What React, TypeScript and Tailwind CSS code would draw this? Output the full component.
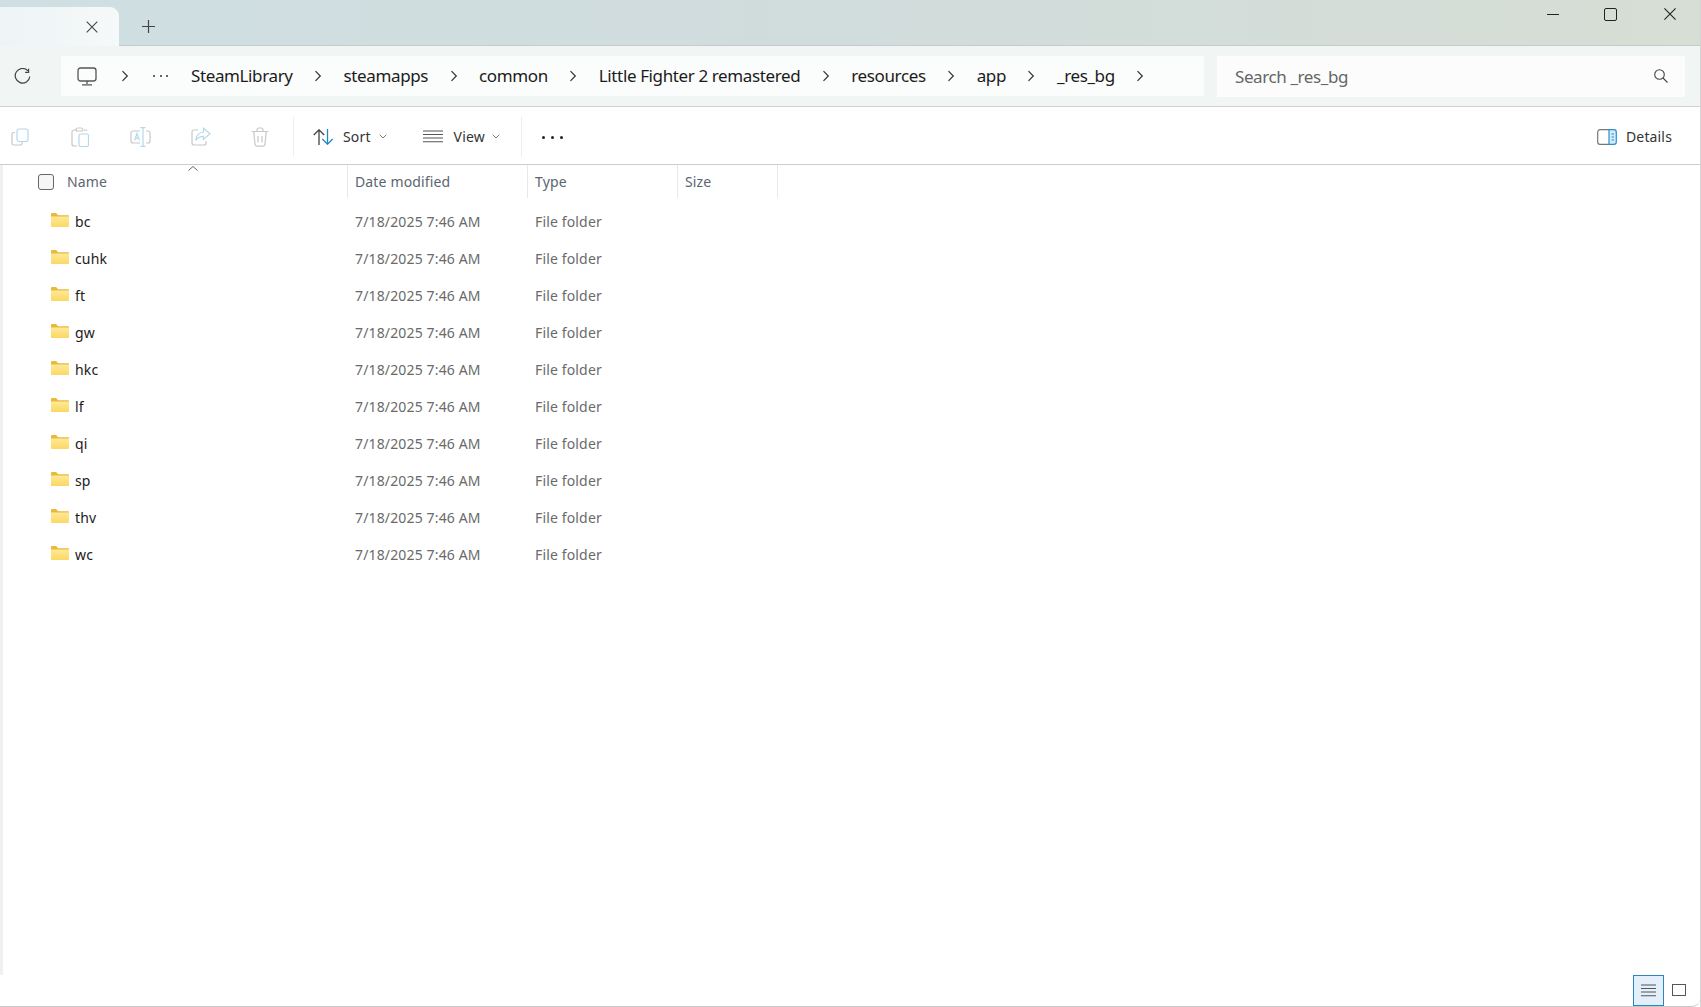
import React from "react";

const crumbs = ["SteamLibrary", "steamapps", "common", "Little Fighter 2 remastered", "resources", "app", "_res_bg"];
const folders = ["bc", "cuhk", "ft", "gw", "hkc", "lf", "qi", "sp", "thv", "wc"];

function Chevron() {
  return (
    <svg width="8" height="12" viewBox="0 0 8 12" fill="none" stroke="#333" strokeWidth="1.2">
      <path d="M1.5 1.2 6.3 6l-4.8 4.8" />
    </svg>
  );
}

function SmallCaret() {
  return (
    <svg width="8" height="5" viewBox="0 0 8 5" fill="none" stroke="#777" strokeWidth="1">
      <path d="M.7.8 4 4l3.3-3.2" />
    </svg>
  );
}

function Folder() {
  return (
    <svg width="18" height="14" viewBox="0 0 18 14" className="shrink-0 -mt-[3px]">
      <defs>
        <linearGradient id="fold" x1="0" y1="0" x2="0" y2="1">
          <stop offset="0" stopColor="#fde997" />
          <stop offset="1" stopColor="#fcd862" />
        </linearGradient>
      </defs>
      <path d="M0 1.2C0 .5.5 0 1.2 0h3.900l2 2.200H17c.6 0 1 .4 1 1V5H0z" fill="#e9b93a" />
      <path d="M0 3.500h18V13c0 .6-.4 1-1 1H1c-.6 0-1-.4-1-1z" fill="url(#fold)" />
    </svg>
  );
}

function ToolIcons() {
  const gray = "#c8c8c8";
  const blue = "#b5d8ee";
  return (
    <div className="flex items-center pl-[11px]">
      <svg width="18" height="18" viewBox="0 0 18 18" fill="none" strokeWidth="1.2" className="mr-[42px]">
        <path d="M4 4.500H2.600C1.700 4.500 1 5.200 1 6.100v9.300c0 .9.7 1.600 1.600 1.600h6.800c.9 0 1.600-.7 1.600-1.600V14" stroke={gray} />
        <rect x="6" y="1" width="11" height="12.500" rx="2.200" stroke={blue} />
      </svg>
      <svg width="18" height="20" viewBox="0 0 18 20" fill="none" strokeWidth="1.2" className="mr-[41px]">
        <path d="M6 3H3C1.900 3 1 3.900 1 5v12c0 1.100.9 2 2 2h3M13 3h1.500C15 3 15.500 3.300 15.800 4M5 3c0-1 .7-2 1.600-2h3.800C11.300 1 12 2 12 3c0 .6-.4 1-1 1H6c-.6 0-1-.4-1-1z" stroke={gray} />
        <rect x="8" y="7" width="9.500" height="12.500" rx="1.800" stroke={blue} />
      </svg>
      <svg width="21" height="20" viewBox="0 0 21 20" fill="none" strokeWidth="1.2" className="mr-[40px]">
        <path d="M10 4H3C1.900 4 1 4.900 1 6v8c0 1.100.9 2 2 2h7M16 4h2c1.100 0 2 .9 2 2v8c0 1.100-.9 2-2 2h-2" stroke={gray} />
        <path d="M10.500.7h5M13 .7v18.600M10.500 19.300h5M4.500 13.500 7 6.500l2.500 7M5.400 11.200h3.200" stroke={blue} />
      </svg>
      <svg width="20" height="19" viewBox="0 0 20 19" fill="none" strokeWidth="1.2" className="mr-[40px]">
        <path d="M7 3H3C1.900 3 1 3.900 1 5v11c0 1.100.9 2 2 2h10c1.100 0 2-.9 2-2v-2" stroke={gray} />
        <path d="M12.500 1.200 19 6.800l-6.500 5.600V9.300C9 9.300 6.300 10.500 4.800 13.500c.3-5 3-8 7.700-8.500z" stroke={blue} />
      </svg>
      <svg width="18" height="20" viewBox="0 0 18 20" fill="none" stroke={gray} strokeWidth="1.200">
        <path d="M.7 4.500h16.600M6 4.500V3c0-1 .8-2 2-2h2c1.200 0 2 1 2 2v1.500M2.700 4.500 4 17c.1 1.200 1 2.200 2.300 2.200h5.400c1.300 0 2.200-1 2.300-2.200l1.300-12.500M7 9v6.500M11 9v6.500" />
      </svg>
    </div>
  );
}

export default function App() {
  return (
    <div className="w-[1701px] h-[1007px] flex flex-col overflow-hidden bg-white border-r border-[#d4d4d4] text-[#1b1b1b] font-['Noto_Sans','Open_Sans',sans-serif]">
      {/* title bar */}
      <div className="h-[46px] shrink-0 flex bg-gradient-to-r from-[#cfdfe3] via-[#d1dcdc] to-[#d6ded5] border-b border-[#c4cdcb]">
        <div className="w-[119px] mt-[7px] h-[39px] rounded-tr-[9px] bg-gradient-to-r from-[#eef3f5] to-[#f5f9fa] flex items-center justify-end pr-[21px]">
          <svg width="12" height="12" viewBox="0 0 12 12" stroke="#444" strokeWidth="1.100" fill="none">
            <path d="M.7.700l10.600 10.600M11.300.700.7 11.300" />
          </svg>
        </div>
        <div className="ml-[23px] mt-[20px] h-[13px]">
          <svg width="13" height="13" viewBox="0 0 13 13" stroke="#444" strokeWidth="1.200" fill="none">
            <path d="M6.500 0v13M0 6.500h13" />
          </svg>
        </div>
        <div className="ml-auto flex items-start pt-[8px] pr-[24px]">
          <div className="w-[12px] h-[12px] flex items-center">
            <div className="w-[12px] h-px bg-[#222]" />
          </div>
          <div className="ml-[45px] w-[13px] h-[13px] border-[1.5px] border-[#222] rounded-[2px]" />
          <svg width="12" height="12" viewBox="0 0 12 12" stroke="#222" strokeWidth="1.100" fill="none" className="ml-[47px]">
            <path d="M.4.400l11.200 11.200M11.600.400.4 11.600" />
          </svg>
        </div>
      </div>

      {/* address row */}
      <div className="h-[61px] shrink-0 flex items-center bg-[#f1f6f5] border-b border-[#cfd2d2] pr-[15px]">
        <div className="w-[61px] shrink-0 flex justify-center pr-[16px]">
          <svg width="17" height="17" viewBox="0 0 17 17" fill="none" stroke="#444" strokeWidth="1.200">
            <path d="M13.900 2.800A7.300 7.300 0 1 0 15.800 8.500" />
            <path d="M14.600.8v3.500h-3.500" />
          </svg>
        </div>
        <div className="w-[1143px] h-[40px] shrink-0 flex items-center bg-[#fbfcfc] pl-[16px] text-[17px] tracking-[-0.38px]">
          <svg width="20" height="19" viewBox="0 0 20 19" fill="none" stroke="#555" strokeWidth="1.300" className="shrink-0">
            <rect x="1" y="1" width="18" height="13" rx="2.500" />
            <path d="M10 14v3M5 17.800h10" />
          </svg>
          <div className="w-[56px] shrink-0 flex justify-center">
            <Chevron />
          </div>
          <div className="w-[15px] shrink-0 flex justify-between">
            <i className="w-[2px] h-[2px] rounded-full bg-[#333]" />
            <i className="w-[2px] h-[2px] rounded-full bg-[#333]" />
            <i className="w-[2px] h-[2px] rounded-full bg-[#333]" />
          </div>
          <div className="w-[23px] shrink-0" />
          {crumbs.map((c) => (
            <React.Fragment key={c}>
              <span className="whitespace-nowrap">{c}</span>
              <div className="w-[51px] shrink-0 flex justify-center">
                <Chevron />
              </div>
            </React.Fragment>
          ))}
        </div>
        <div className="ml-[13px] flex-1 h-[41px] flex items-center bg-[#fbfcfb] pl-[18px] pr-[17px] text-[17px] tracking-[-0.4px] text-[#666]">
          <span className="pt-px">Search _res_bg</span>
          <svg width="14" height="14" viewBox="0 0 14 14" fill="none" stroke="#444" strokeWidth="1.100" className="ml-auto">
            <circle cx="5.500" cy="5.500" r="4.800" />
            <path d="M9 9l4.500 4.500" />
          </svg>
        </div>
      </div>

      {/* command bar */}
      <div className="h-[58px] shrink-0 flex items-center pt-[2px] border-b border-[#cdcdcd] text-[14px] tracking-[0.15px] text-[#333]">
        <ToolIcons />
        <div className="ml-[24px] w-px h-[40px] bg-[#eeeeee]" />
        <svg width="21" height="16" viewBox="0 0 21 16" fill="none" strokeWidth="1.300" className="ml-[19px]">
          <path d="M6 16V1M.8 6 6 .8 11.200 6" stroke="#444" />
          <path d="M14.500 0v15M9.300 10l5.200 5.200L19.700 10" stroke="#1f86c8" />
        </svg>
        <span className="ml-[9px]">Sort</span>
        <div className="ml-[8px]"><SmallCaret /></div>
        <svg width="20" height="13" viewBox="0 0 20 13" stroke="#555" strokeWidth="1.100" className="ml-[36px]">
          <path d="M0 1h20M0 4.500h20M0 8h20M0 11.700h20" />
        </svg>
        <span className="ml-[11px]">View</span>
        <div className="ml-[7px]"><SmallCaret /></div>
        <div className="ml-[21px] w-px h-[40px] bg-[#eeeeee]" />
        <div className="ml-[20px] mt-px w-[21px] flex justify-between">
          <i className="w-[3px] h-[3px] rounded-full bg-[#222]" />
          <i className="w-[3px] h-[3px] rounded-full bg-[#222]" />
          <i className="w-[3px] h-[3px] rounded-full bg-[#222]" />
        </div>
        <svg width="20" height="16" viewBox="0 0 20 16" fill="none" strokeWidth="1.200" className="ml-auto">
          <path d="M12 .7H3C1.700.7.700 1.700.700 3v10c0 1.300 1 2.300 2.300 2.300h9" stroke="#777" />
          <path d="M12 .7h5c1.300 0 2.300 1 2.300 2.300v10c0 1.300-1 2.300-2.300 2.300h-5z" fill="#d5ebf8" stroke="#2b8fd0" />
          <path d="M14.500 5h2.500M14.500 8h2.500M14.500 11h2.500" stroke="#2b8fd0" />
        </svg>
        <span className="ml-[9px] mr-[28px]">Details</span>
      </div>

      {/* file list */}
      <div className="flex-1 flex min-h-0">
        <div className="w-[3px] shrink-0 bg-[#f0f0f0]" />
        <div className="flex-1 flex flex-col text-[14px] tracking-[0.15px]">
          <div className="h-[33px] shrink-0 flex text-[#5b6570]">
            <div className="relative w-[344px] flex items-center pl-[35px]">
              <div className="w-[16px] h-[16px] rounded-[3px] border border-[#666] bg-[#f6f6f6]" />
              <span className="ml-[13px]">Name</span>
              <svg width="10" height="5" viewBox="0 0 10 5" fill="none" stroke="#666" className="absolute left-[185px] top-[1px]">
                <path d="M.5 4.500 5 .5l4.500 4" />
              </svg>
            </div>
            <div className="w-[180px] flex items-center pl-[7px] border-l border-[#e8e8e8]">Date modified</div>
            <div className="w-[150px] flex items-center pl-[7px] border-l border-[#e8e8e8]">Type</div>
            <div className="w-[101px] flex items-center pl-[7px] border-x border-[#e8e8e8]">Size</div>
          </div>
          <div className="flex-1 pt-[5px]">
            {folders.map((f) => (
              <div key={f} className="h-[37px] flex items-center">
                <div className="w-[344px] flex items-center pl-[48px] gap-[6px]">
                  <Folder />
                  <span>{f}</span>
                </div>
                <div className="w-[180px] pl-[8px] text-[#6a6a6a]">7/18/2025 7:46 AM</div>
                <div className="w-[150px] pl-[8px] text-[#6a6a6a]">File folder</div>
              </div>
            ))}
          </div>
        </div>
      </div>

      {/* status bar */}
      <div className="h-[32px] shrink-0 flex items-start justify-end border-b border-[#c8c8c8] rounded-br-[8px] pr-[14px]">
        <div className="w-[31px] h-[31px] flex items-center justify-center bg-[#e3f0fb] border border-[#2b86bd]">
          <svg width="15" height="13" viewBox="0 0 15 13" stroke="#555" strokeWidth="1.100">
            <path d="M0 1h15M0 4.500h15M0 8h15M0 11.700h15" />
          </svg>
        </div>
        <div className="ml-[8px] mt-[9px] w-[14px] h-[12px] border border-[#555]" />
      </div>
    </div>
  );
}
